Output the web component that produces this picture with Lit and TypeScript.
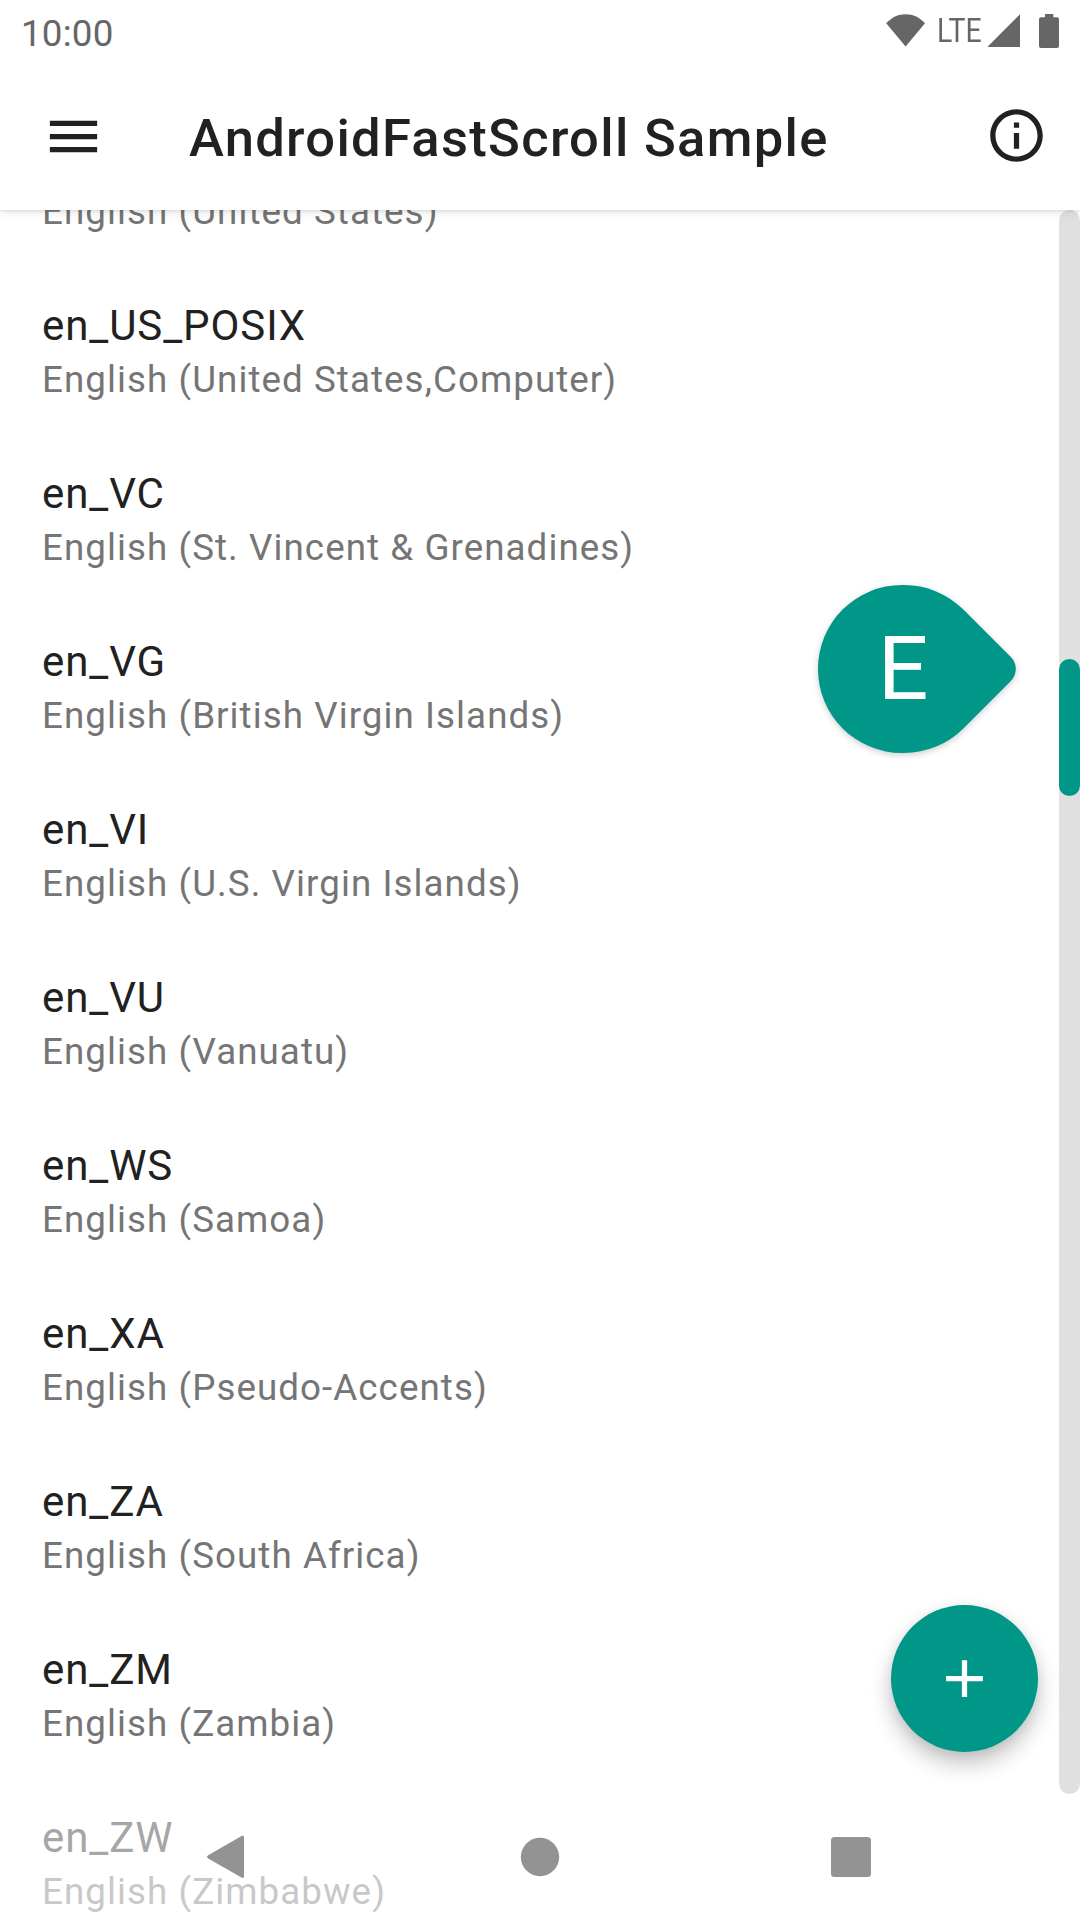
import { LitElement, html, css } from "lit";
import { customElement, property } from "lit/decorators.js";

const LOCALES: Array<[string, string]> = [
  ["", "English (United States)"],
  ["en_US_POSIX", "English (United States,Computer)"],
  ["en_VC", "English (St. Vincent & Grenadines)"],
  ["en_VG", "English (British Virgin Islands)"],
  ["en_VI", "English (U.S. Virgin Islands)"],
  ["en_VU", "English (Vanuatu)"],
  ["en_WS", "English (Samoa)"],
  ["en_XA", "English (Pseudo-Accents)"],
  ["en_ZA", "English (South Africa)"],
  ["en_ZM", "English (Zambia)"],
  ["en_ZW", "English (Zimbabwe)"],
];

@customElement("status-bar")
export class StatusBar extends LitElement {
  static styles = css`
    :host {
      display: flex;
      justify-content: space-between;
      height: 63px;
      padding: 0 21px;
      box-sizing: border-box;
      color: #666;
    }
    .clock {
      font-size: 36.75px;
      line-height: 43px;
      letter-spacing: 0.2px;
      padding-top: 12px;
    }
    .icons {
      display: flex;
      align-items: flex-start;
    }
    svg {
      display: block;
      fill: currentColor;
    }
    .wifi { margin: 14px 11px 0 0; }
    .network {
      width: 48px;
      font-size: 32.3px;
      line-height: 38px;
      padding-top: 12px;
      transform: scaleX(0.88);
      transform-origin: 0 0;
    }
    .signal { margin: 14px 19px 0 2px; }
    .battery { margin-top: 14px; }
  `;
  render() {
    return html`
      <div class="clock">10:00</div>
      <div class="icons">
        <svg class="wifi" width="40" height="33" viewBox="0 0 40 33">
          <path d="M19.6 32.6 0.2 9.2C5.5 3.6 12 0.3 19.6 0.3S33.700 3.600 39 9.200Z" />
        </svg>
        <div class="network">LTE</div>
        <svg class="signal" width="33" height="33" viewBox="0 0 33 33">
          <path d="M0.300 33 33 0.300V33Z" />
        </svg>
        <svg class="battery" width="20" height="34" viewBox="0 0 20 34">
          <path d="M6 0h8.300v3.200H18a2 2 0 0 1 2 2V32a2 2 0 0 1-2 2H2a2 2 0 0 1-2-2V5.200a2 2 0 0 1 2-2H6Z" />
        </svg>
      </div>
    `;
  }
}

@customElement("locale-row")
export class LocaleRow extends LitElement {
  @property() code = "";
  @property() name = "";
  static styles = css`
    :host {
      display: flex;
      flex-direction: column;
      height: 168px;
      padding: 34px 42px 0;
      box-sizing: border-box;
      white-space: nowrap;
    }
    .code {
      height: 51px;
      font-size: 42px;
      line-height: 51px;
      letter-spacing: 0.92px;
      color: #212121;
    }
    .name {
      font-size: 36.75px;
      line-height: 57px;
      letter-spacing: 1.06px;
      color: #757575;
    }
  `;
  render() {
    return html`<div class="code">${this.code}</div>
      <div class="name">${this.name}</div>`;
  }
}

@customElement("app-root")
export class AppRoot extends LitElement {
  static styles = css`
    :host {
      display: block;
      font-family: Roboto, sans-serif;
    }
    .screen {
      position: relative;
      display: flex;
      flex-direction: column;
      width: 1080px;
      height: 1920px;
      overflow: hidden;
      background: #fff;
    }
    .header {
      position: relative;
      z-index: 2;
      flex: none;
      height: 210px;
      background: #fff;
      box-shadow: 0 1px 3px rgba(0, 0, 0, 0.1), 0 4px 10px rgba(0, 0, 0, 0.07);
    }
    .toolbar {
      display: flex;
      align-items: center;
      height: 147px;
      padding: 0 32px 0 42px;
      box-sizing: border-box;
      color: #212121;
    }
    .toolbar svg {
      flex: none;
      fill: currentColor;
    }
    .title {
      flex: 1;
      margin: 0;
      padding: 4px 0 0 84px;
      font-size: 52.5px;
      line-height: 61px;
      font-weight: 500;
      letter-spacing: 1.31px;
      white-space: nowrap;
    }
    .info { margin-bottom: 2px; }
    .content {
      display: flex;
      flex: 1;
      min-height: 0;
      overflow: hidden;
    }
    .list {
      flex: 1;
      margin-top: -112px;
    }
    .track {
      width: 21px;
      height: 1584px;
      padding-top: 449px;
      box-sizing: border-box;
      border-radius: 10.5px;
      background: #e0e0e0;
    }
    .thumb {
      height: 137px;
      border-radius: 10.5px;
      background: #009688;
    }
    .popup {
      position: absolute;
      top: 585px;
      left: 818px;
      width: 168px;
      height: 168px;
      color: #fff;
      font-size: 89.25px;
      line-height: 167px;
      text-align: center;
    }
    .bubble {
      position: absolute;
      inset: 0;
      overflow: visible;
      fill: #009688;
      filter: drop-shadow(0 2px 3px rgba(0, 0, 0, 0.2));
    }
    .letter {
      position: relative;
      padding-left: 2px;
    }
    .fab {
      position: absolute;
      top: 1605px;
      left: 891px;
      display: flex;
      align-items: center;
      justify-content: center;
      width: 147px;
      height: 147px;
      border-radius: 50%;
      background: #009688;
      fill: #fff;
      box-shadow: 0 12px 22px rgba(0, 0, 0, 0.23), 0 2px 12px rgba(0, 0, 0, 0.07);
    }
    .nav {
      position: absolute;
      left: 0;
      right: 0;
      bottom: 0;
      display: flex;
      align-items: center;
      justify-content: center;
      height: 126px;
      background: rgba(255, 255, 255, 0.6);
      fill: #939393;
    }
    .nav-button {
      display: flex;
      justify-content: center;
      width: 311px;
    }
  `;
  render() {
    return html`
      <div class="screen">
        <header class="header">
          <status-bar></status-bar>
          <div class="toolbar">
            <svg width="63" height="63" viewBox="0 0 24 24">
              <path d="M3 18h18v-2H3v2zm0-5h18v-2H3v2zm0-7v2h18V6H3z" />
            </svg>
            <h1 class="title">AndroidFastScroll Sample</h1>
            <svg class="info" width="63" height="63" viewBox="0 0 24 24">
              <path d="M11 7h2v2h-2zm0 4h2v6h-2zm1-9C6.480 2 2 6.480 2 12s4.480 10 10 10 10-4.480 10-10S17.520 2 12 2zm0 18c-4.410 0-8-3.590-8-8s3.590-8 8-8 8 3.590 8 8-3.590 8-8 8z" />
            </svg>
          </div>
        </header>
        <main class="content">
          <div class="list">
            ${LOCALES.map(([code, name]) => html`<locale-row .code=${code} .name=${name}></locale-row>`)}
          </div>
          <div class="track"><div class="thumb"></div></div>
        </main>
        <div class="popup">
          <svg class="bubble" width="198" height="168" viewBox="0 0 198 168">
            <path d="M84 168A84 84 0 0 1 84 0H85.960A84 84 0 0 1 145.360 24.600L192.870 72.120A16.800 16.800 0 0 1 192.870 95.880L145.360 143.400A84 84 0 0 1 85.960 168Z" />
          </svg>
          <div class="letter">E</div>
        </div>
        <div class="fab">
          <svg width="63" height="63" viewBox="0 0 24 24">
            <path d="M19 13h-6v6h-2v-6H5v-2h6V5h2v6h6v2z" />
          </svg>
        </div>
        <nav class="nav">
          <div class="nav-button">
            <svg width="44" height="44" viewBox="0 0 44 44">
              <path d="M1.200 20.200 34.500 1C36 0.200 37 0.800 37 2.300V41.300C37 42.800 36 43.400 34.500 42.600L1.200 23.400C-0.400 22.400-0.400 21.200 1.200 20.200Z" />
            </svg>
          </div>
          <div class="nav-button">
            <svg width="40" height="40" viewBox="0 0 40 40"><circle cx="20" cy="20" r="19.200" /></svg>
          </div>
          <div class="nav-button">
            <svg width="40" height="40" viewBox="0 0 40 40"><rect width="40" height="40" rx="3.500" /></svg>
          </div>
        </nav>
      </div>
    `;
  }
}
